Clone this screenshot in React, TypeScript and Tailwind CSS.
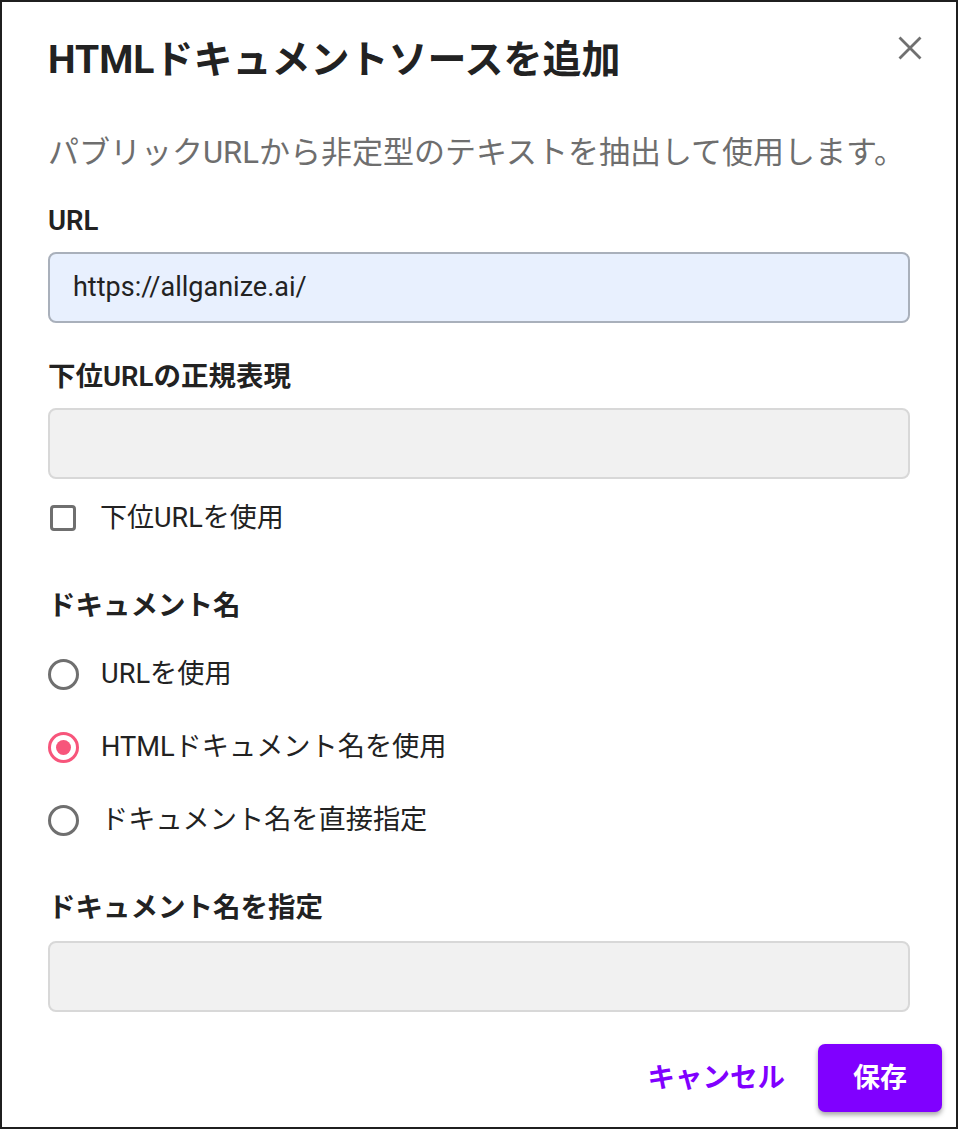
import React, { useState } from 'react';

const font = { fontFamily: 'Roboto, "Noto Sans CJK JP", sans-serif' };

const options = [
  { id: 'url', label: 'URLを使用' },
  { id: 'html', label: 'HTMLドキュメント名を使用' },
  { id: 'custom', label: 'ドキュメント名を直接指定' },
];

function Radio({ checked }: { checked: boolean }) {
  return (
    <span
      className={`flex h-[31px] w-[31px] shrink-0 items-center justify-center rounded-full border-[3px] ${
        checked ? 'border-[#f7557b]' : 'border-[#6f6f6f]'
      }`}
    >
      {checked && <span className="h-[15px] w-[15px] rounded-full bg-[#f7557b]" />}
    </span>
  );
}

export default function App() {
  const [nameMode, setNameMode] = useState('html');

  return (
    <div
      style={font}
      className="flex h-[1129px] w-[958px] flex-col border-2 border-[#1f1f1f] bg-white px-[46px] text-[#222]"
    >
      <div className="mt-[38px] flex items-start justify-between">
        <h1 className="text-[39px] font-bold leading-[40px]">HTMLドキュメントソースを追加</h1>
        <button className="-mr-[18px] -mt-[10px] flex h-[36px] w-[36px] items-center justify-center text-[#707070]">
          <svg width="28" height="28" viewBox="0 0 24 24" fill="none" stroke="currentColor" strokeWidth="2.4">
            <path d="M3 3l18 18M21 3L3 21" />
          </svg>
        </button>
      </div>

      <p className="mt-[55px] text-[31px] leading-[36px] text-[#6e6e6e]">
        パブリックURLから非定型のテキストを抽出して使用します。
      </p>

      <label className="mt-[34px] text-[27.5px] font-semibold leading-[32px]">URL</label>
      <div className="mt-[15px] flex h-[71px] items-center rounded-[8px] border-2 border-[#a9b0bb] bg-[#e8f0fe] px-[23px] text-[27px]">
        https://allganize.ai/
      </div>

      <label className="mt-[38px] text-[27.5px] font-semibold leading-[32px]">下位URLの正規表現</label>
      <div className="mt-[15px] h-[71px] rounded-[8px] border-2 border-[#d8d8d8] bg-[#f1f1f1]" />

      <div className="mt-[23px] flex h-[32px] items-center gap-[24px] pl-[2px]">
        <span className="h-[26px] w-[26px] rounded-[4px] border-[3px] border-[#6f6f6f]" />
        <span className="text-[27px] leading-[32px]">下位URLを使用</span>
      </div>

      <label className="mt-[56px] text-[27.5px] font-semibold leading-[32px]">ドキュメント名</label>
      <div className="mt-[32px] flex flex-col gap-[33px]">
        {options.map((o) => (
          <div
            key={o.id}
            onClick={() => setNameMode(o.id)}
            className="flex h-[40px] cursor-pointer items-center gap-[22px]"
          >
            <Radio checked={nameMode === o.id} />
            <span className="text-[27.2px] leading-[32px]">{o.label}</span>
          </div>
        ))}
      </div>

      <label className="mt-[52px] text-[27.5px] font-semibold leading-[32px]">ドキュメント名を指定</label>
      <div className="mt-[17px] h-[71px] rounded-[8px] border-2 border-[#d8d8d8] bg-[#f1f1f1]" />

      <div className="-mr-[32px] mt-[32px] flex items-center justify-end gap-[33px]">
        <button className="text-[27.5px] font-semibold text-[#8000ff]">キャンセル</button>
        <button className="flex h-[68px] w-[124px] items-center justify-center rounded-[7px] bg-[#8000ff] text-[27px] font-semibold text-white shadow-[0_3px_5px_rgba(0,0,0,0.35)]">
          保存
        </button>
      </div>
    </div>
  );
}
